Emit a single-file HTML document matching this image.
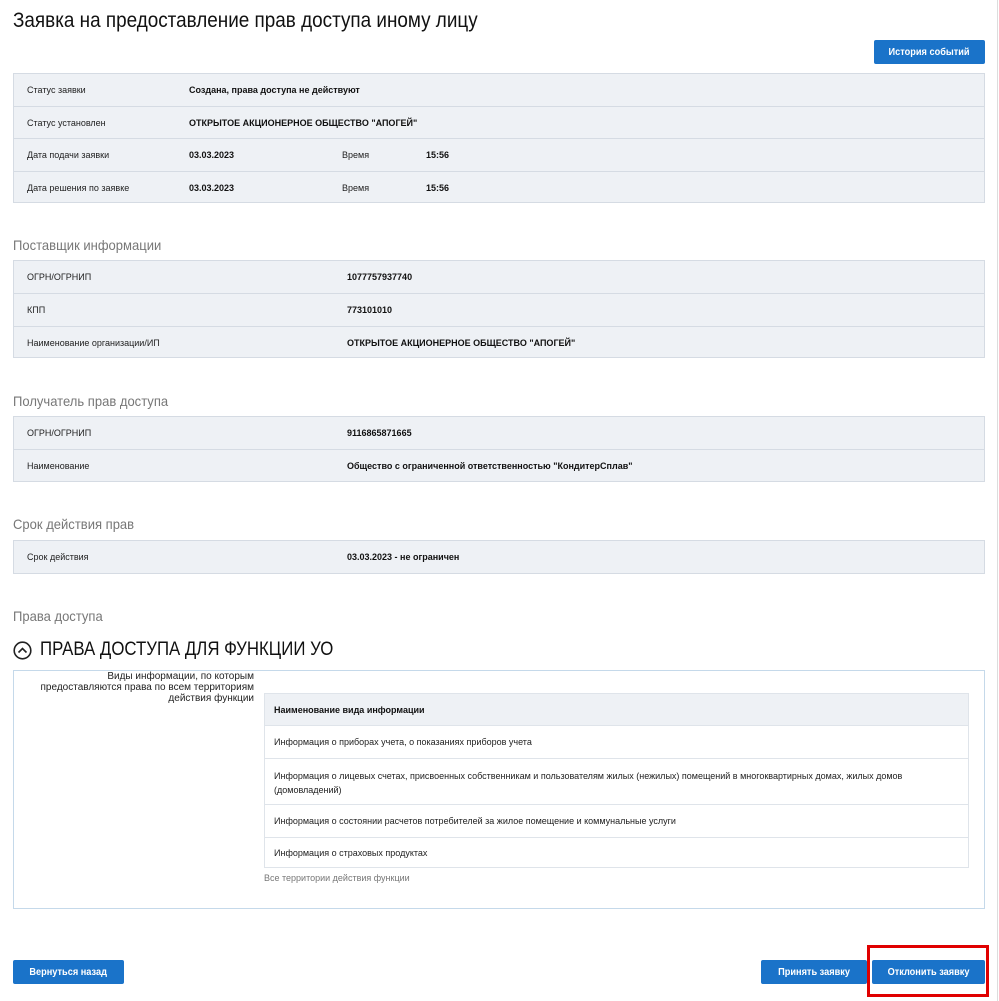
<!DOCTYPE html>
<html><head><meta charset="utf-8"><style>
*{margin:0;padding:0;box-sizing:border-box}
body{width:999px;height:1001px;background:#fff;font-family:"Liberation Sans",sans-serif;color:#222;position:relative;overflow:hidden}
.a{position:absolute}
.sx{transform-origin:left top;white-space:nowrap}
.t{position:absolute;left:13px;width:972px;border:1px solid #d5dbe3;background:#eef1f5}
.r{position:absolute;left:0;right:0;border-top:1px solid #d5dbe3;font-size:9px}
.r span{position:absolute;top:50%;transform:translateY(-50%);white-space:nowrap}
.b{font-weight:bold;color:#111}
.h{position:absolute;left:13px;font-size:14px;color:#777;transform:scaleX(0.93);transform-origin:left top;white-space:nowrap}
.btn{position:absolute;background:#1a73c9;color:#fff;font-size:10px;font-weight:bold;border-radius:2px;height:24px;display:flex;align-items:center;justify-content:center}
.btn span{display:inline-block;transform:scaleX(0.92)}
</style></head><body>
<div class="a" style="right:1px;top:0;width:1px;height:1001px;background:#ddd"></div>
<div class="a sx" style="left:13px;top:9px;font-size:21px;color:#111;transform:scaleX(0.9)">Заявка на предоставление прав доступа иному лицу</div>
<div class="btn" style="left:874px;top:40px;width:111px"><span>История событий</span></div>

<div class="t" style="top:73px;height:130px">
<div class="r" style="top:-1px;height:33px;border-top:none"><span style="left:13px">Статус заявки</span><span class="b" style="left:175px">Создана, права доступа не действуют</span></div>
<div class="r" style="top:32px;height:32px"><span style="left:13px">Статус установлен</span><span class="b" style="left:175px">ОТКРЫТОЕ АКЦИОНЕРНОЕ ОБЩЕСТВО "АПОГЕЙ"</span></div>
<div class="r" style="top:64px;height:33px"><span style="left:13px">Дата подачи заявки</span><span class="b" style="left:175px">03.03.2023</span><span style="left:328px">Время</span><span class="b" style="left:412px">15:56</span></div>
<div class="r" style="top:97px;height:32px"><span style="left:13px">Дата решения по заявке</span><span class="b" style="left:175px">03.03.2023</span><span style="left:328px">Время</span><span class="b" style="left:412px">15:56</span></div>
</div>

<div class="h" style="top:237px">Поставщик информации</div>
<div class="t" style="top:260px;height:98px">
<div class="r" style="top:-1px;height:33px;border-top:none"><span style="left:13px">ОГРН/ОГРНИП</span><span class="b" style="left:333px">1077757937740</span></div>
<div class="r" style="top:32px;height:33px"><span style="left:13px">КПП</span><span class="b" style="left:333px">773101010</span></div>
<div class="r" style="top:65px;height:32px"><span style="left:13px">Наименование организации/ИП</span><span class="b" style="left:333px">ОТКРЫТОЕ АКЦИОНЕРНОЕ ОБЩЕСТВО "АПОГЕЙ"</span></div>
</div>

<div class="h" style="top:393px">Получатель прав доступа</div>
<div class="t" style="top:416px;height:66px">
<div class="r" style="top:-1px;height:33px;border-top:none"><span style="left:13px">ОГРН/ОГРНИП</span><span class="b" style="left:333px">9116865871665</span></div>
<div class="r" style="top:32px;height:33px"><span style="left:13px">Наименование</span><span class="b" style="left:333px">Общество с ограниченной ответственностью "КондитерСплав"</span></div>
</div>

<div class="h" style="top:516px">Срок действия прав</div>
<div class="t" style="top:540px;height:34px">
<div class="r" style="top:-1px;height:33px;border-top:none"><span style="left:13px">Срок действия</span><span class="b" style="left:333px">03.03.2023 - не ограничен</span></div>
</div>

<div class="h" style="top:608px">Права доступа</div>
<svg class="a" style="left:13px;top:641px" width="19" height="19" viewBox="0 0 19 19"><circle cx="9.5" cy="9.5" r="8.3" fill="none" stroke="#222" stroke-width="1.6"/><path d="M5.5 11.5 L9.5 7.5 L13.5 11.5" fill="none" stroke="#222" stroke-width="1.6"/></svg>
<div class="a sx" style="left:40px;top:639px;font-size:19px;color:#111;transform:scaleX(0.885)">ПРАВА ДОСТУПА ДЛЯ ФУНКЦИИ УО</div>

<div class="a" style="left:13px;top:670px;width:972px;height:239px;border:1px solid #c5d9ea"></div>
<div class="a" style="left:20px;top:671px;width:234px;text-align:right;font-size:10px;line-height:11px;color:#222">Виды информации, по которым<br>предоставляются права по всем территориям<br>действия функции</div>
<div class="a" style="left:264px;top:693px;width:705px;height:175px;border:1px solid #dfe4ea;font-size:9px">
<div class="a" style="left:0;right:0;top:0;height:31px;background:#eef1f5"><span class="a b" style="left:9px;top:11px">Наименование вида информации</span></div>
<div class="a" style="left:0;right:0;top:31px;height:33px;border-top:1px solid #dfe4ea"><span class="a" style="left:9px;top:11px">Информация о приборах учета, о показаниях приборов учета</span></div>
<div class="a" style="left:0;right:0;top:64px;height:46px;border-top:1px solid #dfe4ea"><span class="a" style="left:9px;top:10px;right:10px;line-height:14px">Информация о лицевых счетах, присвоенных собственникам и пользователям жилых (нежилых) помещений в многоквартирных домах, жилых домов (домовладений)</span></div>
<div class="a" style="left:0;right:0;top:110px;height:33px;border-top:1px solid #dfe4ea"><span class="a" style="left:9px;top:11px">Информация о состоянии расчетов потребителей за жилое помещение и коммунальные услуги</span></div>
<div class="a" style="left:0;right:0;top:143px;height:31px;border-top:1px solid #dfe4ea"><span class="a" style="left:9px;top:10px">Информация о страховых продуктах</span></div>
</div>
<div class="a" style="left:264px;top:873px;font-size:9px;color:#777">Все территории действия функции</div>

<div class="btn" style="left:13px;top:960px;width:111px"><span>Вернуться назад</span></div>
<div class="btn" style="left:761px;top:960px;width:106px"><span>Принять заявку</span></div>
<div class="btn" style="left:872px;top:960px;width:113px"><span>Отклонить заявку</span></div>
<div class="a" style="left:867px;top:945px;width:122px;height:52px;border:3px solid #e00000"></div>
</body></html>
